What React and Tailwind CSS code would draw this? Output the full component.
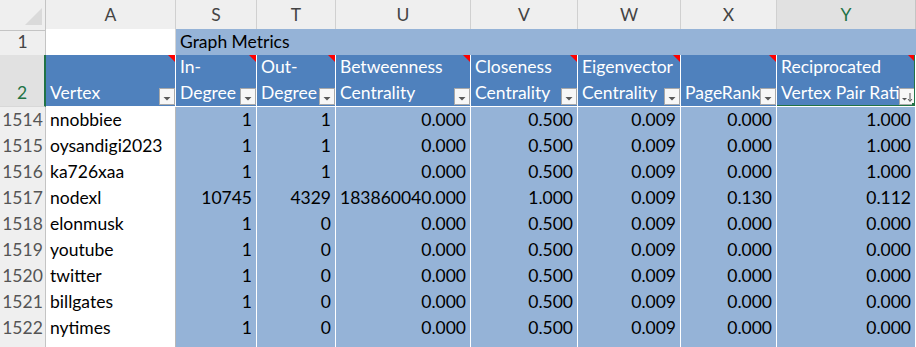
import React from 'react';

const grid =
  'grid grid-cols-[46px_130px_81px_79px_135px_107px_103px_96px_139px]';

const letters = ['A', 'S', 'T', 'U', 'V', 'W', 'X', 'Y'];

const rows = [
  ['1514', 'nnobbiee', '1', '1', '0.000', '0.500', '0.009', '0.000', '1.000'],
  ['1515', 'oysandigi2023', '1', '1', '0.000', '0.500', '0.009', '0.000', '1.000'],
  ['1516', 'ka726xaa', '1', '1', '0.000', '0.500', '0.009', '0.000', '1.000'],
  ['1517', 'nodexl', '10745', '4329', '183860040.000', '1.000', '0.009', '0.130', '0.112'],
  ['1518', 'elonmusk', '1', '0', '0.000', '0.500', '0.009', '0.000', '0.000'],
  ['1519', 'youtube', '1', '0', '0.000', '0.500', '0.009', '0.000', '0.000'],
  ['1520', 'twitter', '1', '0', '0.000', '0.500', '0.009', '0.000', '0.000'],
  ['1521', 'billgates', '1', '0', '0.000', '0.500', '0.009', '0.000', '0.000'],
  ['1522', 'nytimes', '1', '0', '0.000', '0.500', '0.009', '0.000', '0.000'],
];

const headers = [
  ['', 'Vertex'],
  ['In-', 'Degree'],
  ['Out-', 'Degree'],
  ['Betweenness', 'Centrality'],
  ['Closeness', 'Centrality'],
  ['Eigenvector', 'Centrality'],
  ['', 'PageRank'],
];

// little red comment marker in the top-right corner
const Flag = () => (
  <div className="absolute top-0 right-0 w-0 h-0 border-l-[7px] border-l-transparent border-t-[7px] border-t-[#ff0000]" />
);

const FilterButton = ({ sorted }) => (
  <div className="absolute right-0 bottom-[1px] w-[16px] h-[17px] bg-[#f7f7f7] border border-[#a9a9a9] flex items-center justify-center">
    {sorted ? (
      <svg width="14" height="15" viewBox="0 0 14 15">
        <polygon points="2,9 7,9 4.5,11.5" fill="#555" />
        <line x1="10" y1="4" x2="10" y2="12" stroke="#555" strokeWidth="1" />
        <polyline points="8,10 10,12.5 12,10" fill="none" stroke="#555" strokeWidth="1" />
      </svg>
    ) : (
      <svg width="14" height="15" viewBox="0 0 14 15">
        <polygon points="3.5,8 10.5,8 7,11.5" fill="#595959" />
      </svg>
    )}
  </div>
);

const HeaderCell = ({ lines, sorted, selected }) => (
  <div className="relative bg-[#4f81bd] border-r border-b border-white text-white pl-[4px] flex flex-col justify-end overflow-hidden whitespace-nowrap">
    <div className="h-[26px]">{lines[0]}</div>
    <div className="h-[26px]">{lines[1]}</div>
    <Flag />
    <FilterButton sorted={sorted} />
    {selected && (
      <>
        <div className="absolute -left-[2px] -top-[2px] -right-[1px] -bottom-[1px] border-2 border-[#217346]" />
        <div className="absolute -right-[1px] -bottom-[1px] w-[4px] h-[4px] bg-[#217346]" />
      </>
    )}
  </div>
);

export default function App() {
  return (
    <div className="w-[916px] h-[347px] overflow-hidden bg-white font-[Lato,sans-serif] text-[17.5px] leading-[26px] text-black">
      {/* column letters */}
      <div className={`${grid} h-[29px]`}>
        <div className="relative bg-[#efefef] border-r border-b border-[#c4c4c4]">
          <svg className="absolute left-[25px] top-[8px]" width="18" height="18" viewBox="0 0 18 18">
            <polygon points="17,0 17,17 0,17" fill="#dadada" />
          </svg>
        </div>
        {letters.map((l) =>
          l === 'Y' ? (
            <div
              key={l}
              className="bg-[#e1e1e1] border-r border-[#c4c4c4] border-b-2 border-b-[#217346] text-[#217346] text-center leading-[28px] pt-[1px]"
            >
              {l}
            </div>
          ) : (
            <div
              key={l}
              className="bg-[#efefef] border-r border-b border-[#d0d0d0] border-b-[#c4c4c4] text-[#444] text-center leading-[28px] pt-[1px]"
            >
              {l}
            </div>
          )
        )}
      </div>

      {/* row 1 */}
      <div className={`${grid} h-[26px]`}>
        <div className="bg-[#efefef] border-r border-b border-[#c4c4c4] border-b-[#d8d8d8] text-[#444] text-center">1</div>
        <div className="bg-white border-r border-[#d4d4d4]" />
        <div className="col-span-7 bg-[#95b3d7] border-b border-white pl-[4px]">Graph Metrics</div>
      </div>

      {/* row 2: table headers */}
      <div className={`${grid} h-[52px]`}>
        <div className="bg-[#e1e1e1] border-r-2 border-r-[#217346] border-b border-b-[#d8d8d8] text-[#217346] text-center flex flex-col justify-end">
          <div className="h-[26px]">2</div>
        </div>
        {headers.map((h, i) => (
          <HeaderCell key={i} lines={h} />
        ))}
        <HeaderCell lines={['Reciprocated', 'Vertex Pair Ratio']} sorted selected />
      </div>

      {/* data */}
      {rows.map((r) => (
        <div key={r[0]} className={`${grid} h-[26px]`}>
          <div className="bg-[#efefef] border-r border-b border-[#c4c4c4] border-b-[#d8d8d8] text-[#555] text-center">
            {r[0]}
          </div>
          <div className="bg-white border-r border-b border-[#d4d4d4] border-r-[#b8b8b8] pl-[4px] whitespace-nowrap overflow-hidden">
            {r[1]}
          </div>
          {r.slice(2).map((v, i) => (
            <div key={i} className="bg-[#95b3d7] border-r border-b border-white text-right pr-[4px] whitespace-nowrap">
              {v}
            </div>
          ))}
        </div>
      ))}

      {/* partial row */}
      <div className={`${grid} h-[26px]`}>
        <div className="bg-[#efefef] border-r border-[#c4c4c4]" />
        <div className="bg-white border-r border-[#b8b8b8]" />
        {letters.slice(1).map((l) => (
          <div key={l} className="bg-[#95b3d7] border-r border-white" />
        ))}
      </div>
    </div>
  );
}
